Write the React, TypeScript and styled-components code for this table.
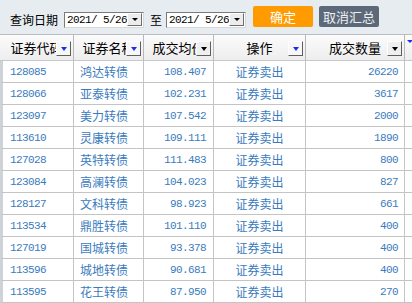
import styled, { createGlobalStyle } from 'styled-components';

const GlobalStyle = createGlobalStyle`
  html, body {
    margin: 0;
    padding: 0;
    background: #ffffff;
  }
  body {
    font-family: "Noto Sans CJK SC", "Noto Sans", sans-serif;
  }
`;

const COLS = '74px 70px 70px 92px 99px 7px';
const DIGITS = '"Liberation Mono", "DejaVu Sans Mono", monospace';

const Page = styled.div`
  width: 412px;
  height: 303px;
  overflow: hidden;
  background: #ffffff;
`;

const Toolbar = styled.div`
  height: 35px;
  box-sizing: border-box;
  display: flex;
  align-items: center;
  padding: 0 0 0 10px;
  background: #e7ecf1;
  border-bottom: 1px solid #b9bdc3;
`;

const Label = styled.span<{ $gap?: number }>`
  font-size: 12px;
  line-height: 14px;
  color: #000;
  margin-top: 5px;
  margin-right: ${({ $gap }) => $gap ?? 6}px;
  white-space: nowrap;
`;

const DateBox = styled.div`
  width: 80px;
  height: 16px;
  margin-top: 5px;
  box-sizing: border-box;
  display: flex;
  align-items: center;
  justify-content: space-between;
  background: #fff;
  border: 1px solid #7a7a7a;
  border-right-color: #d8d8d8;
  border-bottom-color: #d8d8d8;
  padding-left: 2px;
`;

const DateText = styled.span`
  font-family: ${DIGITS};
  font-size: 11px;
  letter-spacing: -0.6px;
  color: #000;
  white-space: pre;
`;

const DropBtn = styled.span`
  width: 15px;
  height: 13px;
  box-sizing: border-box;
  display: flex;
  align-items: center;
  justify-content: center;
  background: #ececec;
  border: 1px solid;
  border-color: #ffffff #6e6e6e #6e6e6e #ffffff;
  margin-right: 1px;
`;

const Tri = styled.span<{ $blue?: boolean; $w?: number }>`
  width: 0;
  height: 0;
  border-left: ${({ $w }) => ($w ?? 7) / 2}px solid transparent;
  border-right: ${({ $w }) => ($w ?? 7) / 2}px solid transparent;
  border-top: ${({ $w }) => Math.ceil(($w ?? 7) / 2)}px solid ${({ $blue }) => ($blue ? '#1530f0' : '#000')};
`;

const Button = styled.button<{ $tone: 'orange' | 'slate' }>`
  width: 60px;
  height: 21px;
  margin-top: -1px;
  margin-right: 6px;
  padding: 0;
  border: none;
  border-radius: 2px;
  font-family: "Noto Sans CJK SC", sans-serif;
  font-size: 13px;
  line-height: 21px;
  color: ${({ $tone }) => ($tone === 'orange' ? '#ffffff' : '#eef0f3')};
  background: ${({ $tone }) => ($tone === 'orange' ? '#ff9a00' : '#5d6978')};
`;

const Grid = styled.div`
  display: grid;
  grid-template-columns: ${COLS};
`;

const HeadCell = styled.div<{ $last?: boolean }>`
  position: relative;
  height: 26px;
  box-sizing: border-box;
  display: flex;
  align-items: center;
  justify-content: center;
  overflow: hidden;
  white-space: nowrap;
  font-size: 13px;
  color: #000;
  background: linear-gradient(#fbfbfb, #eeeeee);
  border-right: ${({ $last }) => ($last ? 'none' : '1px solid #b8b8b8')};
  border-bottom: 1px solid #c4c8cc;
`;

const HeadBtn = styled.span<{ $flat?: boolean }>`
  position: absolute;
  right: 2px;
  top: 6px;
  width: 15px;
  height: 15px;
  box-sizing: border-box;
  display: flex;
  align-items: center;
  justify-content: center;
  background: ${({ $flat }) => ($flat ? '#f7f7f7' : '#efefef')};
  border: 1px solid;
  border-color: #ffffff #5e5e5e #5e5e5e #ffffff;
`;

const EdgeTri = styled.span`
  position: absolute;
  left: 2px;
  top: 8px;
`;

const Cell = styled.div<{ $align: 'left' | 'right' | 'center'; $pad?: number; $strip?: boolean; $mono?: boolean; $last?: boolean }>`
  height: 22px;
  box-sizing: border-box;
  display: flex;
  align-items: center;
  justify-content: ${({ $align }) => ($align === 'left' ? 'flex-start' : $align === 'right' ? 'flex-end' : 'center')};
  padding-left: ${({ $align, $pad }) => ($align === 'left' ? $pad ?? 6 : 0)}px;
  padding-right: ${({ $align, $pad }) => ($align === 'right' ? $pad ?? 6 : 0)}px;
  border-right: ${({ $last }) => ($last ? 'none' : '1px solid #c4c4c4')};
  border-bottom: 1px solid #c4c4c4;
  border-left: ${({ $strip }) => ($strip ? '3px solid #cfd3d8' : 'none')};
  color: #3a7bbd;
  font-size: ${({ $mono }) => ($mono ? '11px' : '12px')};
  font-family: ${({ $mono }) => ($mono ? DIGITS : '"Noto Sans CJK SC", sans-serif')};
  letter-spacing: ${({ $mono }) => ($mono ? '-0.6px' : '0')};
  white-space: nowrap;
  overflow: hidden;
`;

const rows = [
  ['128085', '鸿达转债', '108.407', '26220'],
  ['128066', '亚泰转债', '102.231', '3617'],
  ['123097', '美力转债', '107.542', '2000'],
  ['113610', '灵康转债', '109.111', '1890'],
  ['127028', '英特转债', '111.483', '800'],
  ['123084', '高澜转债', '104.023', '827'],
  ['128127', '文科转债', '98.923', '661'],
  ['113534', '鼎胜转债', '101.110', '400'],
  ['127019', '国城转债', '93.378', '400'],
  ['113596', '城地转债', '90.681', '400'],
  ['113595', '花王转债', '87.950', '270'],
];

const heads: { text: string; blue: boolean }[] = [
  { text: '证券代码', blue: true },
  { text: '证券名称', blue: true },
  { text: '成交均价', blue: false },
  { text: '操作', blue: true },
  { text: '成交数量', blue: false },
];

const DateField = ({ value }: { value: string }) => (
  <DateBox>
    <DateText>{value}</DateText>
    <DropBtn>
      <Tri $w={6} />
    </DropBtn>
  </DateBox>
);

export default function App() {
  return (
    <Page>
      <GlobalStyle />
      <Toolbar>
        <Label>查询日期</Label>
        <DateField value="2021/ 5/26" />
        <Label $gap={4} style={{ marginLeft: 6 }}>至</Label>
        <DateField value="2021/ 5/26" />
        <span style={{ width: 7 }} />
        <Button $tone="orange">确定</Button>
        <Button $tone="slate">取消汇总</Button>
      </Toolbar>
      <Grid>
        {heads.map((h) => (
          <HeadCell key={h.text}>
            {h.text}
            <HeadBtn $flat={h.blue}>
              <Tri $blue={h.blue} />
            </HeadBtn>
          </HeadCell>
        ))}
        <HeadCell $last>
          <EdgeTri>
            <Tri $blue $w={6} />
          </EdgeTri>
        </HeadCell>
        {rows.map((r) => [
          <Cell key={r[0] + 'a'} $align="left" $pad={7} $strip $mono>{r[0]}</Cell>,
          <Cell key={r[0] + 'b'} $align="left" $pad={6}>{r[1]}</Cell>,
          <Cell key={r[0] + 'c'} $align="right" $pad={7} $mono>{r[2]}</Cell>,
          <Cell key={r[0] + 'd'} $align="center">证券卖出</Cell>,
          <Cell key={r[0] + 'e'} $align="right" $pad={6} $mono>{r[3]}</Cell>,
          <Cell key={r[0] + 'f'} $align="center" $last />,
        ])}
      </Grid>
    </Page>
  );
}
